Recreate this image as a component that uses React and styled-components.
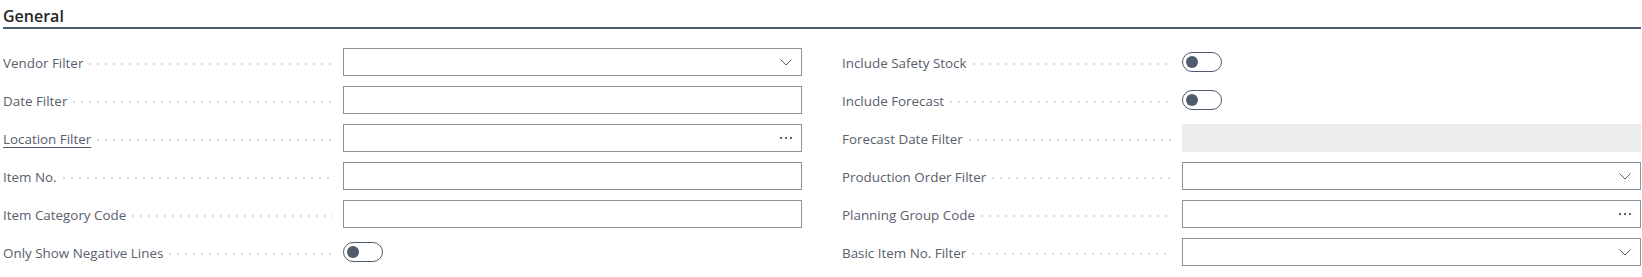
import React from 'react'
import styled, { createGlobalStyle } from 'styled-components'

const GlobalStyle = createGlobalStyle`
  body {
    margin: 0;
    background: #fff;
    font-family: "Open Sans", "Noto Sans", sans-serif;
  }
`

const Section = styled.section`
  padding: 0 1px 0 3px;
`

const Caption = styled.h2`
  margin: 0;
  padding-top: 6px;
  height: 21px;
  line-height: 21px;
  font-size: 16px;
  font-weight: 600;
  color: #262626;
  border-bottom: 2px solid #505c6d;
`

const Columns = styled.div`
  display: grid;
  grid-template-columns: 1fr 1fr;
  column-gap: 40px;
  margin-top: 19px;
`

const Column = styled.div`
  display: flex;
  flex-direction: column;
  gap: 10px;
`

const Row = styled.div`
  display: grid;
  grid-template-columns: 340px 1fr;
  height: 28px;
  align-items: center;
`

const LabelCell = styled.div`
  display: flex;
  align-items: center;
  height: 100%;
  min-width: 0;
  padding-top: 1px;
  box-sizing: border-box;
`

const LabelText = styled.span`
  font-size: 13.4px;
  color: #58606d;
  white-space: nowrap;
  text-decoration: ${p => (p.$link ? 'underline' : 'none')};
  text-underline-offset: 3px;
  text-decoration-color: #505c6d;
`

const Leader = styled.span`
  flex: 1;
  height: 2px;
  margin: 3px 10px 0 6px;
  background-image: linear-gradient(to right, #d9d9d9 2px, transparent 2px);
  background-size: 8px 2px;
  background-repeat: repeat-x;
`

const Field = styled.div`
  box-sizing: border-box;
  height: 28px;
  display: flex;
  align-items: center;
  justify-content: flex-end;
  padding-right: 9px;
  border: 1px solid ${p => (p.$disabled ? '#ebecee' : '#8b929d')};
  background: ${p => (p.$disabled ? '#ebecee' : '#fff')};
`

const Toggle = styled.div`
  box-sizing: border-box;
  width: 40px;
  height: 20px;
  border: 1px solid #505c6d;
  border-radius: 10px;
  display: flex;
  align-items: center;
  padding-left: 3px;
`

const Knob = styled.span`
  width: 12px;
  height: 12px;
  border-radius: 50%;
  background: #505c6d;
`

const Chevron = () => (
  <svg width="12" height="7" viewBox="0 0 12 7">
    <path d="M0.5 0.5 L6 6 L11.5 0.5" fill="none" stroke="#505c6d" strokeWidth="1" />
  </svg>
)

const Ellipsis = () => (
  <svg width="12" height="2" viewBox="0 0 12 2">
    <rect x="0" y="0" width="2" height="2" fill="#5a6372" />
    <rect x="5" y="0" width="2" height="2" fill="#5a6372" />
    <rect x="10" y="0" width="2" height="2" fill="#5a6372" />
  </svg>
)

const Control = ({ type }) => {
  if (type === 'toggle') {
    return (
      <div>
        <Toggle>
          <Knob />
        </Toggle>
      </div>
    )
  }
  return (
    <Field $disabled={type === 'disabled'}>
      {type === 'select' && <Chevron />}
      {type === 'lookup' && <Ellipsis />}
    </Field>
  )
}

const left = [
  { label: 'Vendor Filter', type: 'select' },
  { label: 'Date Filter', type: 'text' },
  { label: 'Location Filter', type: 'lookup', link: true },
  { label: 'Item No.', type: 'text' },
  { label: 'Item Category Code', type: 'text' },
  { label: 'Only Show Negative Lines', type: 'toggle' },
]

const right = [
  { label: 'Include Safety Stock', type: 'toggle' },
  { label: 'Include Forecast', type: 'toggle' },
  { label: 'Forecast Date Filter', type: 'disabled' },
  { label: 'Production Order Filter', type: 'select' },
  { label: 'Planning Group Code', type: 'lookup' },
  { label: 'Basic Item No. Filter', type: 'select' },
]

const FieldRow = ({ label, type, link }) => (
  <Row>
    <LabelCell>
      <LabelText $link={link}>{label}</LabelText>
      <Leader />
    </LabelCell>
    <Control type={type} />
  </Row>
)

const App = () => (
  <Section>
    <GlobalStyle />
    <Caption>General</Caption>
    <Columns>
      <Column>
        {left.map(f => (
          <FieldRow key={f.label} {...f} />
        ))}
      </Column>
      <Column>
        {right.map(f => (
          <FieldRow key={f.label} {...f} />
        ))}
      </Column>
    </Columns>
  </Section>
)

export default App
